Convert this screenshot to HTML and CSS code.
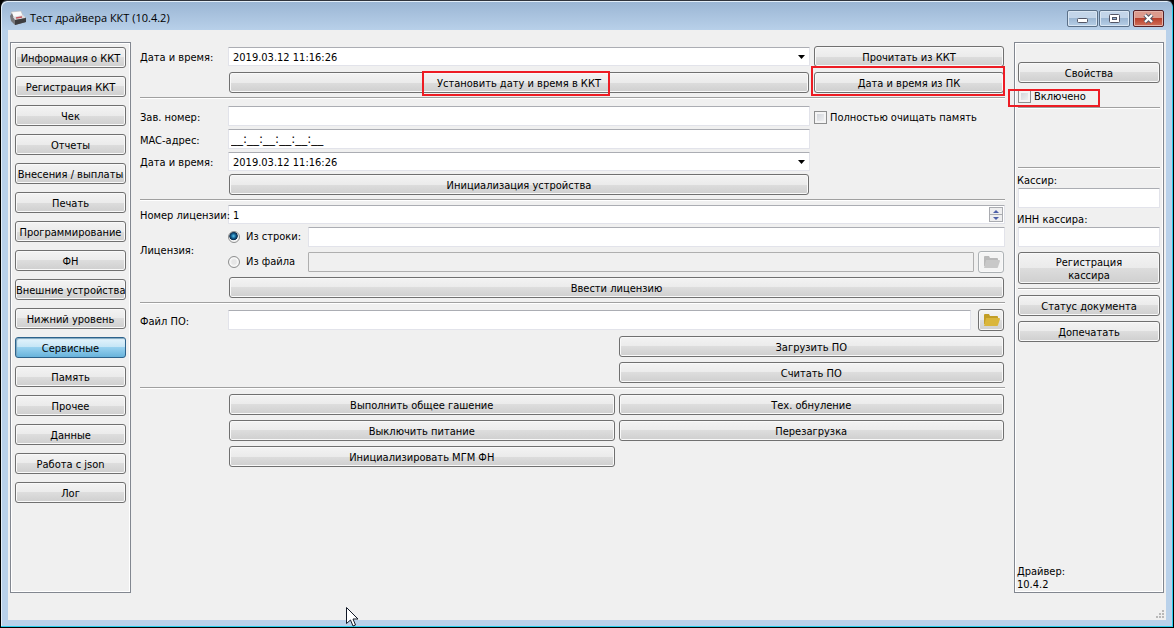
FILE: index.html
```html
<!DOCTYPE html>
<html lang="ru">
<head>
<meta charset="utf-8">
<title>Тест драйвера ККТ</title>
<link rel="stylesheet" href="styles.css">
</head>
<body>
<div class="window">
  <header class="titlebar">
    <svg class="app-icon" width="17" height="16" viewBox="0 0 17 16" aria-hidden="true">
      <path d="M1 2l10-1 2 5-10 3z" fill="#fafafa" stroke="#b9b9b9" stroke-width=".6"/>
      <path d="M0 6l2-3 2 5 12-1v5L5 15 1 11z" fill="#77777b"/>
      <path d="M3 7l10-2 3 3-11 2z" fill="#dcdcde"/>
      <path d="M5 10l11-2v4L5 15z" fill="#3d3d40"/>
      <path d="M6 8l6-1" stroke="#c4555c" stroke-width="1.4"/>
    </svg>
    <h1 class="title">Тест драйвера ККТ (10.4.2)</h1>
    <div class="controls">
      <button class="control" aria-label="Свернуть"><svg width="13" height="11" viewBox="0 0 13 11"><rect x="1.500" y="5.500" width="10" height="4" rx="1" fill="#fff" stroke="#535666"/></svg></button>
      <button class="control" aria-label="Развернуть"><svg width="13" height="11" viewBox="0 0 13 11"><rect x="1.500" y="1.500" width="10" height="8" rx="1" fill="#fff" stroke="#535666"/><rect x="4.500" y="4.500" width="4" height="2" fill="#8fb0d2" stroke="#535666"/></svg></button>
      <button class="control close" aria-label="Закрыть"><svg width="13" height="11" viewBox="0 0 13 11"><path d="M3 2l7 7M10 2l-7 7" stroke="#535666" stroke-width="4.200"/><path d="M3 2l7 7M10 2l-7 7" stroke="#fff" stroke-width="2.200"/></svg></button>
    </div>
  </header>

  <div class="client">
    <nav class="panel nav">
      <button class="btn">Информация о ККТ</button>
      <button class="btn">Регистрация ККТ</button>
      <button class="btn">Чек</button>
      <button class="btn">Отчеты</button>
      <button class="btn">Внесения / выплаты</button>
      <button class="btn">Печать</button>
      <button class="btn">Программирование</button>
      <button class="btn">ФН</button>
      <button class="btn">Внешние устройства</button>
      <button class="btn">Нижний уровень</button>
      <button class="btn active">Сервисные</button>
      <button class="btn">Память</button>
      <button class="btn">Прочее</button>
      <button class="btn">Данные</button>
      <button class="btn">Работа с json</button>
      <button class="btn">Лог</button>
    </nav>

    <main class="main">
      <section class="group clock">
        <label for="dt1">Дата и время:</label>
        <div class="combo">
          <select id="dt1" class="field"><option>2019.03.12 11:16:26</option></select>
          <svg class="arrow" width="7" height="4" viewBox="0 0 7 4"><path d="M0 0h7L3.500 4z"/></svg>
        </div>
        <button class="btn">Прочитать из ККТ</button>
        <div class="marked second"><button class="btn">Установить дату и время в ККТ</button><span class="mark mark-set"></span></div>
        <div class="marked"><button class="btn">Дата и время из ПК</button><span class="mark mark-pc"></span></div>
      </section>

      <section class="group device">
        <label for="serial">Зав. номер:</label>
        <input id="serial" class="field" type="text">
        <label class="check"><input type="checkbox">Полностью очищать память</label>
        <label class="first" for="mac">MAC-адрес:</label>
        <input id="mac" class="field second" type="text" value="__:__:__:__:__:__">
        <label class="first" for="dt2">Дата и время:</label>
        <div class="combo second">
          <select id="dt2" class="field"><option>2019.03.12 11:16:26</option></select>
          <svg class="arrow" width="7" height="4" viewBox="0 0 7 4"><path d="M0 0h7L3.500 4z"/></svg>
        </div>
        <button class="btn second">Инициализация устройства</button>
      </section>

      <section class="group license">
        <label for="num">Номер лицензии:</label>
        <div class="spin">
          <input id="num" class="field" type="number" value="1">
          <div class="steps">
            <button aria-label="Больше"><svg width="6" height="3" viewBox="0 0 6 3"><path d="M0 3h6L3 0z"/></svg></button>
            <button aria-label="Меньше"><svg width="6" height="3" viewBox="0 0 6 3"><path d="M0 0h6L3 3z"/></svg></button>
          </div>
        </div>
        <span class="source-label">Лицензия:</span>
        <div class="source">
          <label class="radio"><input type="radio" name="source" checked>Из строки:</label>
          <input class="field" type="text" aria-label="Строка лицензии">
        </div>
        <div class="source">
          <label class="radio"><input type="radio" name="source">Из файла</label>
          <input class="field" type="text" aria-label="Файл лицензии" disabled>
          <button class="btn folder" aria-label="Выбрать файл лицензии" disabled><svg width="17" height="12" viewBox="0 0 17 12"><path d="M1 10V1q0-1 1-1h4l1 2h7q1 0 1 1v7z" fill="#b9b9b9"/><path d="M3 4h13q1 0 1 1l-2 6q0 1-1 1H1z" fill="#c8c8c8"/></svg></button>
        </div>
        <button class="btn second">Ввести лицензию</button>
      </section>

      <section class="group firmware">
        <label for="fw">Файл ПО:</label>
        <div class="file">
          <input id="fw" class="field" type="text">
          <button class="btn folder" aria-label="Выбрать файл ПО"><svg width="17" height="12" viewBox="0 0 17 12"><path d="M1 10V1q0-1 1-1h4l1 2h7q1 0 1 1v7z" fill="#c29e27"/><path d="M3 4h13q1 0 1 1l-2 6q0 1-1 1H1z" fill="#dab63c"/></svg></button>
        </div>
        <button class="btn third">Загрузить ПО</button>
        <button class="btn third">Считать ПО</button>
      </section>

      <section class="group service">
        <button class="btn second">Выполнить общее гашение</button>
        <button class="btn">Тех. обнуление</button>
        <button class="btn second">Выключить питание</button>
        <button class="btn">Перезагрузка</button>
        <button class="btn second">Инициализировать МГМ ФН</button>
      </section>
    </main>

    <aside class="panel side">
      <button class="btn">Свойства</button>
      <div class="enabled"><label class="check"><input type="checkbox">Включено</label><span class="mark mark-on"></span></div>
      <hr class="rule"><hr class="rule spaced">
      <label class="caption" for="cashier">Кассир:</label>
      <input id="cashier" class="field" type="text">
      <label class="caption" for="inn">ИНН кассира:</label>
      <input id="inn" class="field" type="text">
      <button class="btn tall">Регистрация<br>кассира</button>
      <hr class="rule">
      <div class="stack">
        <button class="btn">Статус документа</button>
        <button class="btn">Допечатать</button>
      </div>
      <p class="version">Драйвер:<br>10.4.2</p>
    </aside>
    <svg class="grip" width="8" height="8" viewBox="0 0 8 8" fill="#b8b8b8"><path d="M6 0h2v2H6zM3 3h2v2H3zM6 3h2v2H6zM0 6h2v2H0zM3 6h2v2H3zM6 6h2v2H6z"/></svg>
  </div>
</div>
<svg class="cursor" width="13" height="20" viewBox="0 0 13 20"><path d="M.5.500v16l4-3.500 2.500 6 2.500-1-2.500-6h5z" fill="#fff" stroke="#111827"/></svg>
</body>
</html>
```

FILE: styles.css
```css
* { box-sizing: border-box; }

body {
  margin: 0;
  background: #000;
  color: #000;
  font: 11px/13px "DejaVu Sans Condensed", "Noto Sans", sans-serif;
}

button, input, select { font: inherit; color: inherit; margin: 0; }

.window {
  display: flex;
  flex-direction: column;
  min-height: 100vh;
  padding: 0 6px 7px;
  border: 1px solid #000;
  border-top-color: #30343c;
  border-radius: 7px 7px 0 0;
  background: linear-gradient(#9ab5d3, #b9d1ea 30px);
  box-shadow: inset -1px -1px 0 #29cdeb, inset 1px 1px 0 #e3eef8;
}

.titlebar {
  display: flex;
  align-items: center;
  height: 29px;
  padding: 5px 3px 0 3px;
}
.title {
  flex: 1;
  margin: 0 0 0 3px;
  font: 11px/16px "Open Sans", "Noto Sans", sans-serif;
}
.controls { display: flex; gap: 1px; }
.control {
  display: grid;
  place-items: center;
  width: 31px;
  height: 17px;
  padding: 0;
  border: 1px solid #5b7088;
  border-radius: 2px;
  background: linear-gradient(#c3d5e9 50%, #9cb7d3 50%, #b7cfe7);
  box-shadow: inset 0 0 0 1px #d9e6f3;
}
.close {
  margin-left: 2px;
  border-color: #552026;
  background: linear-gradient(#dc9a8d 50%, #b9402c 50%, #d0705a);
  box-shadow: inset 0 0 0 1px #e4b3aa;
}

.client {
  position: relative;
  flex: 1;
  display: flex;
  gap: 9px;
  margin: 0 1px;
  padding: 12px 2px 27px;
  background: #f0f0f0;
}

.panel {
  border: 1px solid #828790;
  box-shadow: inset 0 0 0 1px #fff;
}
.nav {
  display: flex;
  flex-direction: column;
  gap: 8px;
  width: 121px;
  padding: 4px;
}

.btn {
  height: 21px;
  width: 100%;
  padding: 2px 0 0;
  border: 1px solid #707070;
  border-radius: 3px;
  background: linear-gradient(#f3f3f3, #ebebeb 50%, #dddddd 50%, #cfcfcf);
  box-shadow: inset 0 0 0 1px #f9f9f9;
  text-align: center;
  white-space: nowrap;
}
.btn.active {
  border-color: #2c628b;
  background: linear-gradient(#e5f4fc, #c4e5f6 50%, #98d1ef 50%, #68b3db);
  box-shadow: inset 1px 1px 1px #7da5bd;
}

.field {
  width: 100%;
  height: 20px;
  padding: 0 2px;
  border: 1px solid #e2e3ea;
  border-top-color: #abadb3;
  border-radius: 1px;
  background: #fff;
  appearance: none;
  outline: none;
}
.field:disabled { border-color: #afafaf; background: #f0f0f0; }
#mac { font: 12px/13px "DejaVu Sans", sans-serif; }

.combo { position: relative; display: flex; }
.combo .field { height: 19px; padding: 1px 0 0 4px; }
.arrow { position: absolute; right: 5px; top: 8px; pointer-events: none; }

.main { flex: 1; min-width: 0; padding-top: 4px; }

.group {
  display: grid;
  align-items: center;
  padding-bottom: 4px;
}
.group + .group {
  border-top: 1px solid #a0a0a0;
  box-shadow: inset 0 1px 0 #fff;
  padding-top: 5px;
}
.group > label, .source-label { position: relative; z-index: 1; padding-top: 2px; white-space: nowrap; }
.group .first { grid-column: 1; }
.group .second { grid-column: 2; }

.clock, .device { grid-template-columns: 84px 1fr 191px; column-gap: 4px; }
.clock { row-gap: 5px; }
.device { row-gap: 3px; }
.group.device { padding-top: 8px; }
.clock > .btn { width: calc(100% - 1px); }
.device > .btn { width: auto; margin: 0 1px; }

.marked { position: relative; display: flex; padding-right: 1px; }
.marked.second { padding: 0 1px; }
.mark { position: absolute; border: 2px solid #ed1c24; pointer-events: none; }
.mark-set { left: 50%; top: -1px; width: 188px; height: 25px; margin-left: -97px; }
.mark-pc { inset: -6px 0 -3px -3px; }
.mark-on { left: -10px; top: -1px; width: 92px; height: 18px; }

.check, .radio { display: flex; align-items: center; white-space: nowrap; }
.check input {
  appearance: none;
  width: 13px;
  height: 13px;
  margin-right: 3px;
  border: 1px solid #8e8f8f;
  background: linear-gradient(135deg, #cbcfd5, #f6f6f6);
  box-shadow: inset 0 0 0 2px #f4f4f4;
}
.radio { width: 80px; }
.radio input {
  appearance: none;
  width: 12px;
  height: 12px;
  margin-right: 6px;
  border: 1px solid #8e8f8f;
  border-radius: 50%;
  background: radial-gradient(#e6e6e6 30%, #fafafa 60%, #ccc);
}
.radio input:checked {
  background: radial-gradient(circle at 45% 40%, #59c5ee 0, #135f91 28%, #0c2c4c 48%, #f4f4f4 56%);
}

.license, .firmware { grid-template-columns: 88px 1fr; }
.source-label { grid-row: 2 / 4; }
.source { grid-column: 2; display: flex; align-items: center; height: 25px; }
.source .radio { flex: none; }
.license > .btn { width: auto; margin: 3px 1px 0; }
.spin { position: relative; display: flex; }
.spin .field { height: 19px; padding: 1px 4px 0; appearance: textfield; }
.spin .field::-webkit-inner-spin-button { appearance: none; }
.steps { position: absolute; right: 2px; top: 2px; width: 14px; }
.steps button {
  display: grid;
  place-items: center;
  width: 100%;
  height: 8px;
  padding: 0;
  border: 1px solid #a9abb0;
  background: #eeeeef;
}
.steps button + button { margin-top: -1px; }
.steps svg { fill: #4c5fa8; }

.folder {
  flex: none;
  display: grid;
  place-items: center;
  width: 26px;
  height: 22px;
  margin: 0 1px 0 4px;
  padding: 0;
}
.folder:disabled { border-color: #adb2b5; background: #f4f4f4; }

.group.firmware, .group.service { padding-top: 6px; }
.firmware { row-gap: 5px; }
.file { display: flex; align-items: center; gap: 3px; }
.third { grid-column: 2; justify-self: end; width: calc(50% - 3px); margin-right: 1px; }

.service { grid-template-columns: 85px 1fr 1fr; gap: 5px 4px; padding-right: 1px; }

.side {
  display: flex;
  flex-direction: column;
  width: 150px;
  padding: 19px 3px 1px;
}
.enabled { position: relative; margin-top: 7px; }
.rule {
  width: 100%;
  height: 2px;
  margin: 4px 0 0;
  border: 0;
  border-top: 1px solid #a0a0a0;
  background: #fff;
}
.rule.spaced { margin-top: 58px; }
.caption { margin: 5px -1px 1px; }
.caption + .field { flex: none; }
.side .tall { height: 32px; margin-top: 5px; }
.side .btn { flex: none; }
.stack { display: grid; gap: 5px; margin-top: 5px; }
.version { margin: auto -1px 0; }

.grip { position: absolute; right: 2px; bottom: 2px; }
.cursor { position: absolute; left: 346px; top: 607px; }
```
